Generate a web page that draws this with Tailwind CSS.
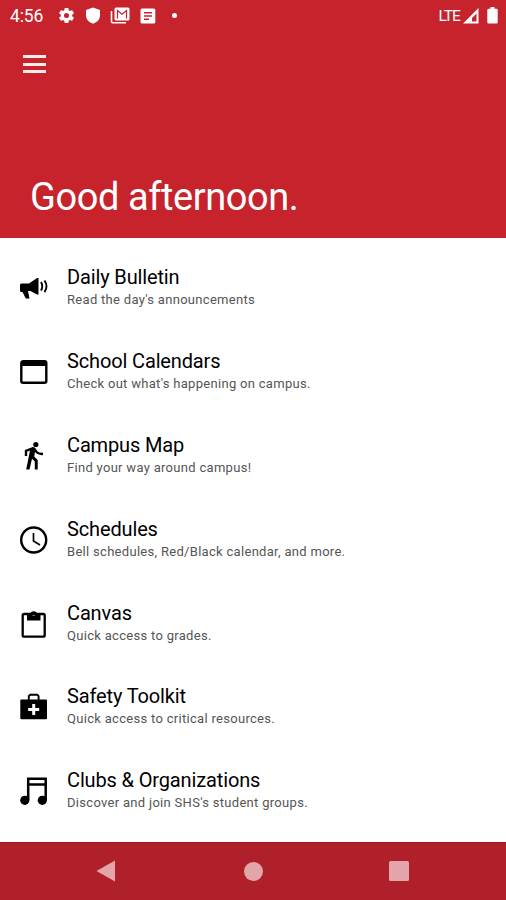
<!DOCTYPE html>
<html lang="en">
<head>
    <meta charset="UTF-8">
    <title>Home</title>
    <script src="https://cdn.jsdelivr.net/npm/@tailwindcss/browser@4"></script>
</head>
<body class="bg-white text-black font-[Roboto,sans-serif]">
    <div class="flex flex-col h-[900px] w-[506px] overflow-hidden">
        <!-- Header -->
        <header class="h-[238px] shrink-0 bg-[#c7232d] text-white flex flex-col">
            <div class="h-[31px] flex items-center justify-between pl-[10px] pr-[8px]">
                <div class="flex items-center">
                    <span class="w-[47px] text-[17.5px] leading-5 tracking-[-0.1px] whitespace-nowrap">4:56</span>
                    <svg class="w-[19px] h-[19px] mr-[9px]" viewBox="0 0 24 24" fill="currentColor"><path d="M19.14 12.94a7.1 7.1 0 0 0 0-1.88l2.03-1.58a.5.5 0 0 0 .12-.61l-1.92-3.32a.5.5 0 0 0-.59-.22l-2.39.96a7 7 0 0 0-1.62-.94l-.36-2.54a.5.5 0 0 0-.48-.41h-3.84a.5.5 0 0 0-.47.41l-.36 2.54a7.3 7.3 0 0 0-1.62.94l-2.39-.96a.5.5 0 0 0-.59.22L2.74 8.87a.5.5 0 0 0 .12.61l2.03 1.58a7.5 7.5 0 0 0 0 1.88l-2.03 1.58a.5.5 0 0 0-.12.61l1.92 3.32c.12.22.37.29.59.22l2.39-.96c.5.38 1.03.7 1.62.94l.36 2.54c.05.24.24.41.48.41h3.84c.24 0 .44-.17.47-.41l.36-2.54a7 7 0 0 0 1.62-.94l2.39.96c.22.08.47 0 .59-.22l1.92-3.32a.5.5 0 0 0-.12-.61zM12 15.2a3.2 3.2 0 1 1 0-6.4 3.2 3.2 0 0 1 0 6.4z"/></svg>
                    <svg class="w-[16px] h-[17px] mr-[9px]" viewBox="0 0 16 17" fill="currentColor"><path d="M8 .5 15 3v5.2c0 4-2.6 7-7 8.500-4.400-1.500-7-4.500-7-8.500V3z"/></svg>
                    <svg class="w-[20px] h-[17px] mr-[9px]" viewBox="0 0 20 17"><path d="M1.500 4v10.500q0 1.200 1.200 1.200H16" fill="none" stroke="currentColor" stroke-width="1.600"/><rect x="4.500" y=".5" width="15" height="13" rx="1.500" fill="currentColor"/><path d="M7.500 11.500V3.500l4.500 3.800 4.500-3.800v8" fill="none" stroke="#c7232d" stroke-width="1.200"/></svg>
                    <svg class="w-[16px] h-[16px] translate-x-px" viewBox="0 0 16 16"><rect x=".5" y=".5" width="14.800" height="15" rx="1.500" fill="currentColor"/><path d="M4 4.700h8M4 8h8M4 11.300h5" stroke="#c7232d" stroke-width="1.500"/></svg>
                    <span class="ml-[17px] w-[5px] h-[5px] rounded-full bg-white"></span>
                </div>
                <div class="flex items-center">
                    <span class="text-[15.500px] leading-5 tracking-[-0.9px] mr-[3px]">LTE</span>
                    <svg class="w-[16px] h-[16px] mr-[8px]" viewBox="0 0 16 16"><path fill="currentColor" fill-rule="evenodd" d="M15.500 0v15.500H0zM13.500 5.500 9 10v3.500H13.500z"/></svg>
                    <svg class="w-[11px] h-[17px]" viewBox="0 0 11 17" fill="currentColor"><path d="M3.500 0h4v1.700H9.500q1.200 0 1.200 1.200v12.400q0 1.200-1.200 1.200h-8q-1.200 0-1.200-1.200V2.900q0-1.200 1.200-1.200h2z"/></svg>
                </div>
            </div>
            <button class="mt-[24px] ml-[23px] w-[23px] h-[18px] flex flex-col justify-between">
                <span class="w-full h-[3px] bg-[#fdebec]"></span>
                <span class="w-full h-[3px] bg-[#fdebec]"></span>
                <span class="w-full h-[3px] bg-[#fdebec]"></span>
            </button>
            <h1 class="mt-[101px] pl-[30px] text-[38px] leading-[46px] tracking-[-0.42px] whitespace-nowrap">Good afternoon.</h1>
        </header>

        <!-- Menu -->
        <main class="flex-1 min-h-0 pt-[25px] pl-[19px]">
            <a class="flex h-[83.900px]">
                <svg class="w-[29px] h-[30px] mt-[10px] mr-[19px]" viewBox="0 0 29 30"><path d="M1 12q0-1.500 1.500-1.500H10L18 5h1.500V21.500H18L11.500 18 9 18l1.500 7.500H6.800L3.500 19H2.500Q1 19 1 17.500z" fill="currentColor"/><path d="M22 9q2.500 4.300 0 8.600M25.500 7.500q4 5.800 0 11.600" fill="none" stroke="currentColor" stroke-width="1.900"/></svg>
                <div><h2 class="text-[20px] leading-7 tracking-[-0.14px]">Daily Bulletin</h2><p class="text-[13px] leading-[18px] tracking-[0.300px] text-[#555]">Read the day's announcements</p></div>
            </a>
            <a class="flex h-[83.900px]">
                <svg class="w-[29px] h-[30px] mt-[10px] mr-[19px]" viewBox="0 0 29 30"><rect x="2.300" y="4.300" width="25" height="21.500" rx="1.800" fill="none" stroke="currentColor" stroke-width="2.400"/><path d="M2 4h25v5H2z" fill="currentColor"/></svg>
                <div><h2 class="text-[20px] leading-7 tracking-[-0.14px]">School Calendars</h2><p class="text-[13px] leading-[18px] tracking-[0.300px] text-[#555]">Check out what's happening on campus.</p></div>
            </a>
            <a class="flex h-[83.900px]">
                <svg class="w-[29px] h-[30px] mt-[10px] mr-[19px]" viewBox="0 0 29 30"><circle cx="16.800" cy="3.500" r="2.600" fill="currentColor"/><path d="M7 15V9.800L13.500 7.300Q15 7 16 8.700L17.500 11Q19.500 13 24 13" fill="none" stroke="currentColor" stroke-width="2.400"/><path d="M11.300 8 16.500 8 15.200 15.500 18.700 19V28.500H15.800V20.500L13 17.700 10.500 28.500H7.200z" fill="currentColor"/></svg>
                <div><h2 class="text-[20px] leading-7 tracking-[-0.14px]">Campus Map</h2><p class="text-[13px] leading-[18px] tracking-[0.300px] text-[#555]">Find your way around campus!</p></div>
            </a>
            <a class="flex h-[83.900px]">
                <svg class="w-[29px] h-[30px] mt-[10px] mr-[19px]" viewBox="0 0 29 30" fill="none" stroke="currentColor"><circle cx="14.700" cy="15" r="12.500" stroke-width="2.400"/><path d="M14.500 8v8l6.500 4" stroke-width="1.700"/></svg>
                <div><h2 class="text-[20px] leading-7 tracking-[-0.14px]">Schedules</h2><p class="text-[13px] leading-[18px] tracking-[0.300px] text-[#555]">Bell schedules, Red/Black calendar, and more.</p></div>
            </a>
            <a class="flex h-[83.900px]">
                <svg class="w-[29px] h-[30px] mt-[10px] mr-[19px]" viewBox="0 0 29 30"><rect x="3.700" y="5" width="22" height="22.700" rx="1.500" fill="none" stroke="currentColor" stroke-width="2.300"/><path fill="currentColor" fill-rule="evenodd" d="M8 11.500V5h3.200a3.600 3.600 0 0 1 7 0h3.300v6.500zM14.700 3.800a1.500 1.500 0 1 0 0 3 1.500 1.500 0 0 0 0-3z"/></svg>
                <div><h2 class="text-[20px] leading-7 tracking-[-0.14px]">Canvas</h2><p class="text-[13px] leading-[18px] tracking-[0.300px] text-[#555]">Quick access to grades.</p></div>
            </a>
            <a class="flex h-[83.900px]">
                <svg class="w-[29px] h-[30px] mt-[10px] mr-[19px]" viewBox="0 0 29 30"><rect x="1.300" y="7.500" width="26.700" height="19.800" rx="1" fill="currentColor"/><path d="M9.800 8V4.200L11.200 2.800H18.200l1.400 1.400V8" fill="none" stroke="currentColor" stroke-width="1.900"/><path d="M14.700 12v11M9.200 17.500h11" stroke="white" stroke-width="3"/></svg>
                <div><h2 class="text-[20px] leading-7 tracking-[-0.14px]">Safety Toolkit</h2><p class="text-[13px] leading-[18px] tracking-[0.300px] text-[#555]">Quick access to critical resources.</p></div>
            </a>
            <a class="flex h-[83.900px]">
                <svg class="w-[29px] h-[30px] mt-[10px] mr-[19px]" viewBox="0 0 29 30"><path d="M9.200 24V2.800H26.700V24M9.200 8.500H26.700" fill="none" stroke="currentColor" stroke-width="2.500"/><circle cx="5.800" cy="24.300" r="4.600" fill="currentColor"/><circle cx="23.300" cy="24.300" r="4.600" fill="currentColor"/></svg>
                <div><h2 class="text-[20px] leading-7 tracking-[-0.14px]">Clubs &amp; Organizations</h2><p class="text-[13px] leading-[18px] tracking-[0.300px] text-[#555]">Discover and join SHS's student groups.</p></div>
            </a>
        </main>

        <!-- System navigation -->
        <nav class="h-[58px] shrink-0 bg-[#b0202a] border-t border-[#a30f1a] text-[#e3a5aa] flex items-center justify-between pl-[96px] pr-[97px] pb-px">
            <svg class="w-[20px] h-[22px]" viewBox="0 0 20 22" fill="currentColor"><path d="M.5 11 19 .5v21z"/></svg>
            <span class="w-[19px] h-[19px] ml-px rounded-full bg-current"></span>
            <span class="w-[20px] h-[20px] rounded-[1.500px] bg-current"></span>
        </nav>
    </div>
</body>
</html>
